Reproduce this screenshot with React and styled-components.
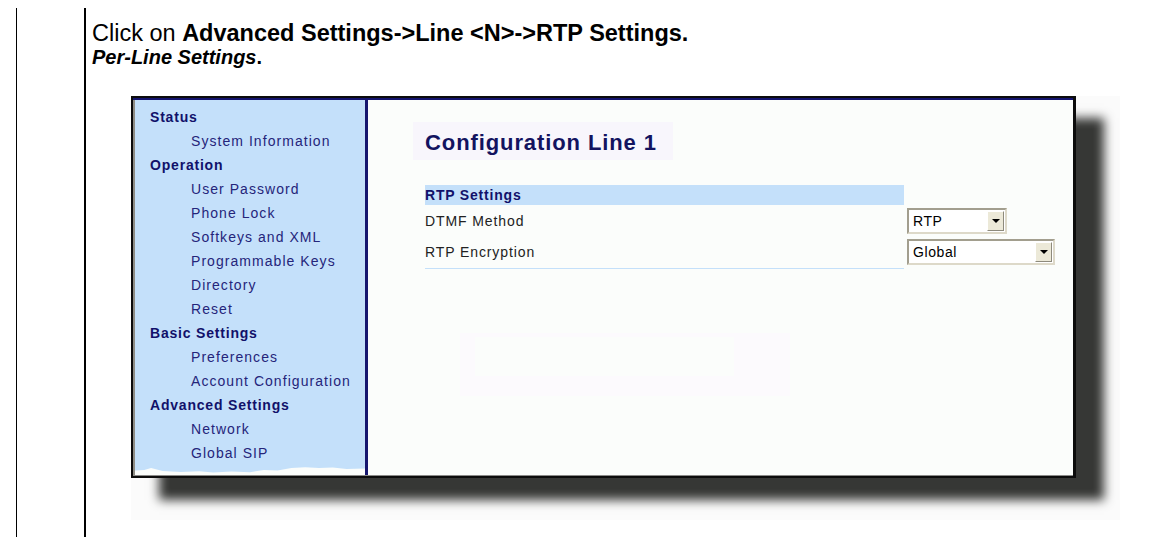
import React from "react";
import styled, { createGlobalStyle } from "styled-components";

const GlobalStyle = createGlobalStyle`
  html, body { margin: 0; padding: 0; background: #ffffff; }
  body { font-family: "Liberation Sans", Arial, sans-serif; }
`;

const Page = styled.div`
  display: flex;
  height: 537px;
  padding: 8px 0 0 16px;
  box-sizing: border-box;
  overflow: hidden;
`;

const Gutter = styled.div`
  flex: none;
  width: 67px;
  border-left: 1px solid #000;
`;

const Content = styled.div`
  flex: 1;
  border-left: 2px solid #000;
  padding-left: 6px;
`;

const Instructions = styled.div`
  padding-top: 12px;
  color: #000;
`;

const Line = styled.div`
  white-space: nowrap;
  font-size: ${(p) => p.$size}px;
  line-height: ${(p) => p.$lh}px;
  font-weight: ${(p) => (p.$bold ? "bold" : "normal")};
`;

const ShotCanvas = styled.div`
  margin-top: 28px;
  margin-left: 39px;
  width: 989px;
  height: 424px;
  background: #fbfbfb;
`;

const Frame = styled.div`
  width: 945px;
  height: 382px;
  box-sizing: border-box;
  border: 2px solid #0c0c0c;
  border-right-width: 3px;
  box-shadow: 28px 22px 10px #363735;
  background: #fbfdfb;
  display: flex;
  flex-direction: column;
`;

const FrameBody = styled.div`
  flex: 1;
  min-height: 0;
  display: flex;
  border-top: 2px solid #14146e;
  border-bottom: 1px solid #8a8a88;
`;

const Nav = styled.nav`
  flex: none;
  width: 235px;
  box-sizing: border-box;
  background: #c4e0fa;
  border-left: 2px solid #8e8c84;
  border-right: 3px solid #16166e;
  padding-top: 5px;
  display: flex;
  flex-direction: column;
`;

const NavHeading = styled.div`
  height: 24px;
  line-height: 24px;
  padding-left: 15px;
  font-size: 14px;
  font-weight: bold;
  letter-spacing: 0.8px;
  color: #11116a;
  white-space: nowrap;
`;

const NavItem = styled.div`
  height: 24px;
  line-height: 24px;
  padding-left: 56px;
  font-size: 14px;
  letter-spacing: 1.05px;
  color: #25257a;
  white-space: nowrap;
`;

const NavTear = styled.div`
  margin-top: auto;
  height: 11px;
  background: #fbfdfb;
  clip-path: polygon(
    0% 55%, 4% 50%, 7% 30%, 12% 60%, 20% 70%, 28% 62%, 34% 75%, 42% 66%,
    50% 72%, 56% 50%, 62% 55%, 68% 30%, 74% 22%, 80% 30%, 86% 26%, 92% 40%,
    100% 35%, 100% 100%, 0% 100%
  );
`;

const Main = styled.main`
  flex: 1;
  background: #fbfdfb;
  padding: 22px 0 0 45px;
`;

const TitleBox = styled.div`
  width: 260px;
  height: 38px;
  box-sizing: border-box;
  background: #f8f6fc;
  padding: 4px 0 0 12px;
  display: flex;
  align-items: center;
`;

const Title = styled.h1`
  margin: 0;
  font-size: 22px;
  font-weight: bold;
  letter-spacing: 0.9px;
  color: #13135f;
  white-space: nowrap;
`;

const SettingsGrid = styled.div`
  margin: 25px 0 0 12px;
  display: grid;
  grid-template-columns: 479px auto;
  column-gap: 3px;
  align-items: center;
`;

const SectionHeader = styled.div`
  grid-column: 1;
  height: 20px;
  line-height: 21px;
  background: #c4e0fa;
  font-size: 14px;
  font-weight: bold;
  letter-spacing: 0.8px;
  color: #11116a;
`;

const HeaderFill = styled.div`
  grid-column: 2;
`;

const Label = styled.div`
  grid-column: 1;
  height: 31px;
  display: flex;
  align-items: center;
  padding-top: 1px;
  box-sizing: border-box;
  font-size: 14px;
  letter-spacing: 0.9px;
  color: #222;
`;

const SelectBox = styled.div`
  grid-column: 2;
  width: ${(p) => p.$width}px;
  height: 26px;
  box-sizing: border-box;
  border: 2px solid;
  border-color: #a29e8e #ddd9c9 #ddd9c9 #a29e8e;
  background: #ffffff;
  display: flex;
  align-items: center;
  padding-left: 4px;
  font-size: 14px;
  letter-spacing: 0.6px;
  color: #000;
`;

const SelectText = styled.span`
  flex: 1;
`;

const DropButton = styled.div`
  flex: none;
  width: 17px;
  height: 20px;
  margin-right: 1px;
  box-sizing: border-box;
  background: #ece9d8;
  border: 1px solid;
  border-color: #ffffff #8d8a7c #8d8a7c #ffffff;
  display: flex;
  align-items: center;
  justify-content: center;

  &::after {
    content: "";
    border-left: 4px solid transparent;
    border-right: 4px solid transparent;
    border-top: 4px solid #000;
  }
`;

const Rule = styled.div`
  grid-column: 1;
  height: 1px;
  margin-top: 1px;
  background: #c4e0fa;
`;

const GhostOuter = styled.div`
  margin: 64px 0 0 47px;
  width: 330px;
  height: 63px;
  box-sizing: border-box;
  background: #fcfafd;
  padding: 4px 0 0 15px;
`;

const GhostInner = styled.div`
  width: 259px;
  height: 39px;
  background: #fbfdfb;
`;

const navGroups = [
  { heading: "Status", items: ["System Information"] },
  {
    heading: "Operation",
    items: [
      "User Password",
      "Phone Lock",
      "Softkeys and XML",
      "Programmable Keys",
      "Directory",
      "Reset",
    ],
  },
  { heading: "Basic Settings", items: ["Preferences", "Account Configuration"] },
  { heading: "Advanced Settings", items: ["Network", "Global SIP"] },
];

const rows = [
  { label: "DTMF Method", value: "RTP", width: 100 },
  { label: "RTP Encryption", value: "Global", width: 148 },
];

export default function App() {
  return (
    <>
      <GlobalStyle />
      <Page>
        <Gutter />
        <Content>
          <Instructions>
            <Line $size={23.5} $lh={26}>
              Click on <b>Advanced Settings-&gt;Line &lt;N&gt;-&gt;RTP Settings.</b>
            </Line>
            <Line $size={20} $lh={22} $bold>
              <i>Per-Line Settings</i>.
            </Line>
          </Instructions>
          <ShotCanvas>
            <Frame>
              <FrameBody>
                <Nav>
                  {navGroups.map((g) => (
                    <React.Fragment key={g.heading}>
                      <NavHeading>{g.heading}</NavHeading>
                      {g.items.map((it) => (
                        <NavItem key={it}>{it}</NavItem>
                      ))}
                    </React.Fragment>
                  ))}
                  <NavTear />
                </Nav>
                <Main>
                  <TitleBox>
                    <Title>Configuration Line 1</Title>
                  </TitleBox>
                  <SettingsGrid>
                    <SectionHeader>RTP Settings</SectionHeader>
                    <HeaderFill />
                    {rows.map((r) => (
                      <React.Fragment key={r.label}>
                        <Label>{r.label}</Label>
                        <SelectBox $width={r.width}>
                          <SelectText>{r.value}</SelectText>
                          <DropButton />
                        </SelectBox>
                      </React.Fragment>
                    ))}
                    <Rule />
                  </SettingsGrid>
                  <GhostOuter>
                    <GhostInner />
                  </GhostOuter>
                </Main>
              </FrameBody>
            </Frame>
          </ShotCanvas>
        </Content>
      </Page>
    </>
  );
}
